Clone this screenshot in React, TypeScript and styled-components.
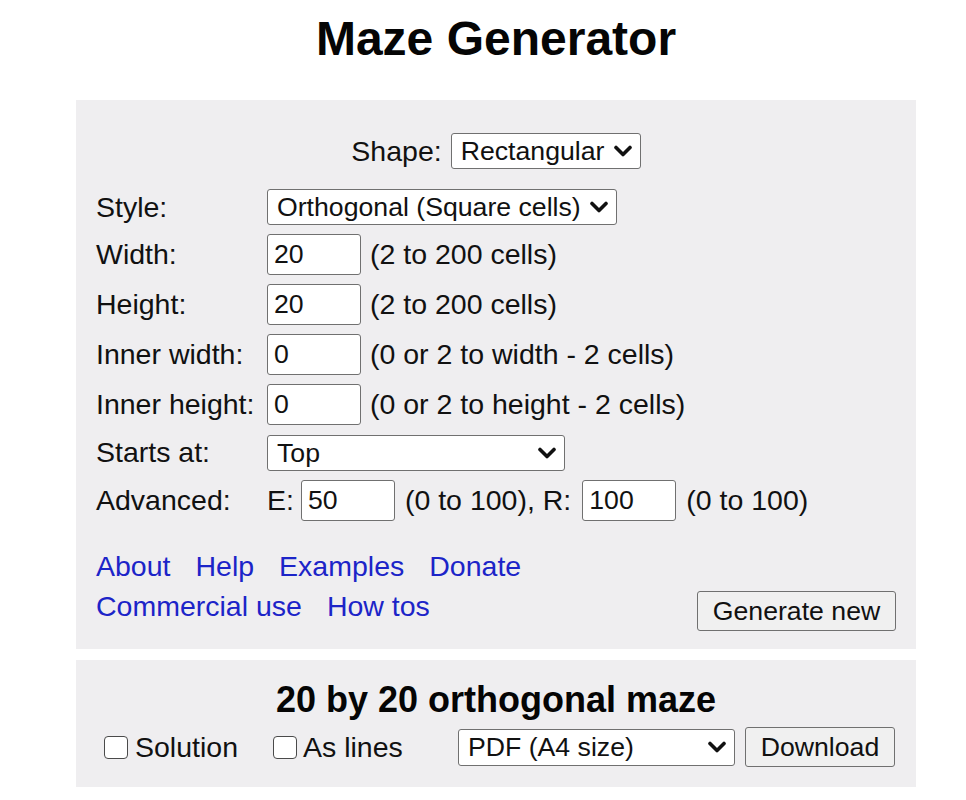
import React from "react";
import styled, { createGlobalStyle } from "styled-components";

const GlobalStyle = createGlobalStyle`
  html, body {
    margin: 0;
    padding: 0;
    background: #ffffff;
    color: #000000;
    font-family: "Liberation Sans", Arial, sans-serif;
  }
  * { box-sizing: border-box; }
`;

const Page = styled.div`
  width: 916px;
  padding: 11px 0 0 76px;
`;

const Title = styled.h1`
  margin: 0 0 33px;
  font-size: 48px;
  line-height: 56px;
  font-weight: 700;
  text-align: center;
  color: #050505;
`;

const Panel = styled.section<{ $pad: string; $mt?: number }>`
  background: #efeef0;
  padding: ${(p) => p.$pad};
  margin-top: ${(p) => p.$mt ?? 0}px;
`;

const ShapeRow = styled.div`
  display: flex;
  justify-content: center;
  align-items: center;
  gap: 9px;
  height: 36px;
  margin-bottom: 20px;
`;

const Text = styled.span<{ $ml?: number }>`
  font-size: 28.5px;
  color: #111;
  white-space: nowrap;
  margin-left: ${(p) => p.$ml ?? 0}px;
`;

const FormGrid = styled.div`
  display: grid;
  grid-template-columns: 171px auto;
  row-gap: 9px;
  align-items: center;
`;

const Field = styled.div<{ $mt?: number }>`
  display: flex;
  align-items: center;
  margin-top: ${(p) => p.$mt ?? 0}px;
`;

const TextInput = styled.input<{ $ml?: number }>`
  width: 94px;
  height: 41px;
  margin: 0 0 0 ${(p) => p.$ml ?? 0}px;
  padding: 0 6px;
  border: 1px solid #707070;
  border-radius: 3px;
  background: #ffffff;
  font-family: "Liberation Sans", Arial, sans-serif;
  font-size: 26.67px;
  color: #111;
`;

const SelectWrap = styled.div<{ $w: number; $h: number }>`
  position: relative;
  display: inline-flex;
  width: ${(p) => p.$w}px;
  height: ${(p) => p.$h}px;
`;

const NativeSelect = styled.select`
  appearance: none;
  -webkit-appearance: none;
  width: 100%;
  height: 100%;
  margin: 0;
  padding: 0 30px 0 9px;
  border: 1px solid #707070;
  border-radius: 3px;
  background: #ffffff;
  font-family: "Liberation Sans", Arial, sans-serif;
  font-size: 26.67px;
  color: #111;
`;

const Chevron = styled.svg`
  position: absolute;
  right: 9px;
  top: 50%;
  transform: translateY(-50%);
  pointer-events: none;
`;

const Footer = styled.div`
  display: flex;
  justify-content: space-between;
  align-items: flex-end;
  margin-top: 25px;
`;

const Links = styled.div`
  display: flex;
  flex-direction: column;
  margin-bottom: 5px;
`;

const LinkLine = styled.div`
  display: flex;
  gap: 25px;
  line-height: 40px;
`;

const Link = styled.a`
  font-size: 28.5px;
  color: #1c24c8;
  text-decoration: none;
`;

const Button = styled.button<{ $w: number }>`
  width: ${(p) => p.$w}px;
  height: 40px;
  margin: 0;
  padding: 0;
  border: 1px solid #707070;
  border-radius: 3px;
  background: #f0f0f0;
  font-family: "Liberation Sans", Arial, sans-serif;
  font-size: 26.67px;
  color: #111;
`;

const SubTitle = styled.h2`
  margin: 0 0 7px;
  font-size: 36px;
  line-height: 40px;
  font-weight: 700;
  text-align: center;
  color: #050505;
`;

const OptionsRow = styled.div`
  display: flex;
  align-items: center;
  padding-left: 7px;
`;

const CheckLabel = styled.label<{ $mr?: number }>`
  display: flex;
  align-items: center;
  font-size: 28.5px;
  color: #111;
  margin-right: ${(p) => p.$mr ?? 0}px;
`;

const Checkbox = styled.input<{ $gap: number }>`
  appearance: none;
  -webkit-appearance: none;
  width: 24px;
  height: 23px;
  margin: 0 ${(p) => p.$gap}px 0 0;
  border: 1px solid #4a4a4a;
  border-radius: 4px;
  background: #ffffff;
`;

const RightGroup = styled.div`
  display: flex;
  align-items: center;
  gap: 10px;
  margin-left: auto;
`;

function Select({ w, h, value, options }: { w: number; h: number; value: string; options: string[] }) {
  return (
    <SelectWrap $w={w} $h={h}>
      <NativeSelect defaultValue={value}>
        {options.map((o) => (
          <option key={o}>{o}</option>
        ))}
      </NativeSelect>
      <Chevron width="18" height="12" viewBox="0 0 18 12">
        <polyline points="2,2.5 9,9.5 16,2.5" fill="none" stroke="#111" strokeWidth="3.6" strokeLinecap="round" strokeLinejoin="round" />
      </Chevron>
    </SelectWrap>
  );
}

export default function App() {
  return (
    <>
      <GlobalStyle />
      <Page>
        <Title>Maze Generator</Title>
        <Panel $pad="33px 20px 18px 20px">
          <ShapeRow>
            <Text>Shape:</Text>
            <Select w={190} h={36} value="Rectangular" options={["Rectangular", "Circular", "Triangular", "Hexagonal"]} />
          </ShapeRow>
          <FormGrid>
            <Text>Style:</Text>
            <Field>
              <Select w={350} h={36} value="Orthogonal (Square cells)" options={["Orthogonal (Square cells)", "Sigma (Hexagonal cells)", "Delta (Triangular cells)"]} />
            </Field>

            <Text>Width:</Text>
            <Field>
              <TextInput defaultValue="20" />
              <Text $ml={9}>(2 to 200 cells)</Text>
            </Field>

            <Text>Height:</Text>
            <Field>
              <TextInput defaultValue="20" />
              <Text $ml={9}>(2 to 200 cells)</Text>
            </Field>

            <Text>Inner width:</Text>
            <Field>
              <TextInput defaultValue="0" />
              <Text $ml={9}>(0 or 2 to width - 2 cells)</Text>
            </Field>

            <Text>Inner height:</Text>
            <Field>
              <TextInput defaultValue="0" />
              <Text $ml={9}>(0 or 2 to height - 2 cells)</Text>
            </Field>

            <Text>Starts at:</Text>
            <Field $mt={1}>
              <Select w={298} h={36} value="Top" options={["Top", "Bottom", "Left", "Right"]} />
            </Field>

            <Text>Advanced:</Text>
            <Field>
              <Text>E:</Text>
              <TextInput $ml={7} defaultValue="50" />
              <Text $ml={10}>(0 to 100), R:</Text>
              <TextInput $ml={11} defaultValue="100" />
              <Text $ml={10}>(0 to 100)</Text>
            </Field>
          </FormGrid>
          <Footer>
            <Links>
              <LinkLine>
                <Link href="#">About</Link>
                <Link href="#">Help</Link>
                <Link href="#">Examples</Link>
                <Link href="#">Donate</Link>
              </LinkLine>
              <LinkLine>
                <Link href="#">Commercial use</Link>
                <Link href="#">How tos</Link>
              </LinkLine>
            </Links>
            <Button $w={199}>Generate new</Button>
          </Footer>
        </Panel>
        <Panel $pad="20px 21px 20px 21px" $mt={11}>
          <SubTitle>20 by 20 orthogonal maze</SubTitle>
          <OptionsRow>
            <CheckLabel $mr={35}>
              <Checkbox type="checkbox" $gap={7} />
              Solution
            </CheckLabel>
            <CheckLabel>
              <Checkbox type="checkbox" $gap={6} />
              As lines
            </CheckLabel>
            <RightGroup>
              <Select w={277} h={37} value="PDF (A4 size)" options={["PDF (A4 size)", "PDF (Letter size)", "SVG", "PNG"]} />
              <Button $w={150}>Download</Button>
            </RightGroup>
          </OptionsRow>
        </Panel>
      </Page>
    </>
  );
}
